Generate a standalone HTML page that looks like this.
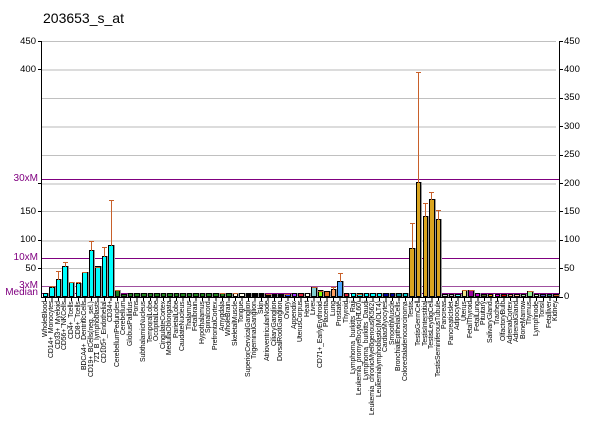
<!DOCTYPE html>
<html><head><style>
body{margin:0;width:600px;height:434px;background:#fff;position:relative;overflow:hidden;font-family:"Liberation Sans",sans-serif}
.a{position:absolute}
.t{position:absolute;font-size:14px;left:43px;top:10px;color:#000}
.gl{position:absolute;left:42px;width:514px;height:1px;background:#c0c0c0}
.gl.l{background:#dcdcdc;height:2px}
.ly{position:absolute;font-size:9.5px;right:564px;text-align:right;line-height:10px;color:#000}
.ry{position:absolute;font-size:9.5px;left:564px;line-height:10px;color:#000}
.tk{position:absolute;width:3px;height:1px;background:#000}
.pl{position:absolute;left:42px;width:517px;height:1.5px;background:#800080}
.pt{position:absolute;font-size:10px;color:#800080;right:562px;line-height:10px}
#bars{position:absolute;left:42.8px;top:41px;height:256px;display:flex;align-items:flex-end}
.c{width:6.55px;height:256px;position:relative;flex:none}
.c b{position:absolute;bottom:0;left:0;width:5.5px;height:calc(var(--v)*0.569px + 1px);background:var(--c);border:1px solid #000;box-sizing:border-box;box-shadow:1px 0 0 #999}
.c i{position:absolute;left:2.3px;width:1px;background:#c8602a;bottom:calc(var(--v)*0.569px);height:calc((var(--e) - var(--v))*0.569px)}
.c i:before{content:"";position:absolute;top:0;left:-2px;width:5px;height:1px;background:#c8602a}
#labs{position:absolute;left:42.8px;top:301px;height:130px;display:flex}
#labs span{width:6.55px;flex:none;writing-mode:vertical-rl;transform:rotate(180deg);text-align:right;font-size:6.9px;line-height:6.55px;height:130px;white-space:nowrap;color:#000;letter-spacing:-0.1px}
</style></head><body>
<div class="t">203653_s_at</div>
<div class="gl" style="top:41px"></div>
<div class="gl l" style="top:69px"></div>
<div class="gl" style="top:98px"></div>
<div class="gl l" style="top:126px"></div>
<div class="gl" style="top:155px"></div>
<div class="gl l" style="top:183px"></div>
<div class="gl" style="top:211px"></div>
<div class="gl l" style="top:240px"></div>
<div class="gl" style="top:268px"></div>
<div class="a" style="left:41px;top:41px;width:1px;height:257px;background:#000"></div>
<div class="a" style="left:559px;top:41px;width:1px;height:257px;background:#000"></div>
<div class="a" style="left:41px;top:297px;width:519px;height:1px;background:#000"></div>
<div class="tk" style="left:38px;top:41px"></div><div class="ly" style="top:37px">450</div>
<div class="tk" style="left:38px;top:69px"></div><div class="ly" style="top:65px">400</div>
<div class="tk" style="left:38px;top:183px"></div>
<div class="tk" style="left:38px;top:211px"></div><div class="ly" style="top:207px">150</div>
<div class="tk" style="left:38px;top:240px"></div><div class="ly" style="top:235px">100</div>
<div class="tk" style="left:38px;top:268px"></div><div class="ly" style="top:264px">50</div>
<div class="tk" style="left:560px;top:41px"></div><div class="ry" style="top:37px">450</div>
<div class="tk" style="left:560px;top:69px"></div><div class="ry" style="top:65px">400</div>
<div class="tk" style="left:560px;top:98px"></div><div class="ry" style="top:93px">350</div>
<div class="tk" style="left:560px;top:126px"></div><div class="ry" style="top:122px">300</div>
<div class="tk" style="left:560px;top:155px"></div><div class="ry" style="top:150px">250</div>
<div class="tk" style="left:560px;top:183px"></div><div class="ry" style="top:179px">200</div>
<div class="tk" style="left:560px;top:211px"></div><div class="ry" style="top:207px">150</div>
<div class="tk" style="left:560px;top:240px"></div><div class="ry" style="top:235px">100</div>
<div class="tk" style="left:560px;top:268px"></div><div class="ry" style="top:264px">50</div>
<div class="tk" style="left:560px;top:297px"></div><div class="ry" style="top:292px">0</div>
<div class="pl" style="top:178.5px"></div><div class="pt" style="top:174px">30xM</div>
<div class="pl" style="top:257.5px"></div><div class="pt" style="top:253px">10xM</div>
<div class="pl" style="top:285.5px;background:#a050a0"></div><div class="pt" style="top:281px">3xM</div>
<div class="pl" style="top:292.5px"></div><div class="pt" style="top:288px">Median</div>
<div id="bars">
<div class="c" style="--v:5;--c:#0ff"><b></b></div>
<div class="c" style="--v:15;--c:#0ff;--e:20"><b></b><i></i></div>
<div class="c" style="--v:30;--c:#0ff;--e:45"><b></b><i></i></div>
<div class="c" style="--v:52;--c:#0ff;--e:62"><b></b><i></i></div>
<div class="c" style="--v:25;--c:#0ff;--e:26"><b></b><i></i></div>
<div class="c" style="--v:22;--c:#0ff;--e:27"><b></b><i></i></div>
<div class="c" style="--v:43;--c:#0ff;--e:44"><b></b><i></i></div>
<div class="c" style="--v:80;--c:#0ff;--e:98"><b></b><i></i></div>
<div class="c" style="--v:52;--c:#0ff;--e:53"><b></b><i></i></div>
<div class="c" style="--v:70;--c:#0ff;--e:88"><b></b><i></i></div>
<div class="c" style="--v:90;--c:#0ff;--e:170"><b></b><i></i></div>
<div class="c" style="--v:10;--c:#1a801a;--e:13"><b></b><i></i></div>
<div class="c" style="--v:4;--c:#1a801a"><b></b></div>
<div class="c" style="--v:5;--c:#1a801a"><b></b></div>
<div class="c" style="--v:5;--c:#1a801a"><b></b></div>
<div class="c" style="--v:5;--c:#1a801a"><b></b></div>
<div class="c" style="--v:5;--c:#1a801a"><b></b></div>
<div class="c" style="--v:5;--c:#1a801a"><b></b></div>
<div class="c" style="--v:5;--c:#1a801a"><b></b></div>
<div class="c" style="--v:5;--c:#1a801a"><b></b></div>
<div class="c" style="--v:5;--c:#1a801a"><b></b></div>
<div class="c" style="--v:5;--c:#1a801a"><b></b></div>
<div class="c" style="--v:5;--c:#1a801a"><b></b></div>
<div class="c" style="--v:5;--c:#1a801a"><b></b></div>
<div class="c" style="--v:5;--c:#1a801a"><b></b></div>
<div class="c" style="--v:5;--c:#1a801a"><b></b></div>
<div class="c" style="--v:5;--c:#1a801a"><b></b></div>
<div class="c" style="--v:5;--c:#1a801a;--e:7"><b></b><i></i></div>
<div class="c" style="--v:5;--c:#1a801a"><b></b></div>
<div class="c" style="--v:5;--c:#fff5dc;--e:7"><b></b><i></i></div>
<div class="c" style="--v:5;--c:#fffff0"><b></b></div>
<div class="c" style="--v:5;--c:#000"><b></b></div>
<div class="c" style="--v:5;--c:#000"><b></b></div>
<div class="c" style="--v:5;--c:#000"><b></b></div>
<div class="c" style="--v:4;--c:#000;--e:5"><b></b><i></i></div>
<div class="c" style="--v:4;--c:#000"><b></b></div>
<div class="c" style="--v:4;--c:#000"><b></b></div>
<div class="c" style="--v:4;--c:#2040ff;--e:5"><b></b><i></i></div>
<div class="c" style="--v:5;--c:#9933ff"><b></b></div>
<div class="c" style="--v:6;--c:#e0203a"><b></b></div>
<div class="c" style="--v:5;--c:#fffff0"><b></b></div>
<div class="c" style="--v:15;--c:#80d0d0;--e:17"><b></b><i></i></div>
<div class="c" style="--v:10;--c:#80ff00;--e:11"><b></b><i></i></div>
<div class="c" style="--v:8;--c:#e07020"><b></b></div>
<div class="c" style="--v:13;--c:#ffa060;--e:18"><b></b><i></i></div>
<div class="c" style="--v:26;--c:#4da6ff;--e:42"><b></b><i></i></div>
<div class="c" style="--v:5;--c:#e0203a"><b></b></div>
<div class="c" style="--v:5;--c:#0ff"><b></b></div>
<div class="c" style="--v:5;--c:#0ff;--e:6"><b></b><i></i></div>
<div class="c" style="--v:5;--c:#0ff"><b></b></div>
<div class="c" style="--v:5;--c:#0ff"><b></b></div>
<div class="c" style="--v:5;--c:#0ff"><b></b></div>
<div class="c" style="--v:6;--c:#000099"><b></b></div>
<div class="c" style="--v:6;--c:#000099"><b></b></div>
<div class="c" style="--v:6;--c:#008b8b"><b></b></div>
<div class="c" style="--v:5;--c:#00cccc"><b></b></div>
<div class="c" style="--v:85;--c:#daa520;--e:130"><b></b><i></i></div>
<div class="c" style="--v:200;--c:#daa520;--e:395"><b></b><i></i></div>
<div class="c" style="--v:140;--c:#daa520;--e:165"><b></b><i></i></div>
<div class="c" style="--v:170;--c:#daa520;--e:185"><b></b><i></i></div>
<div class="c" style="--v:135;--c:#daa520;--e:153"><b></b><i></i></div>
<div class="c" style="--v:4;--c:#d0d0d0"><b></b></div>
<div class="c" style="--v:4;--c:#c0c0c0"><b></b></div>
<div class="c" style="--v:4;--c:#66ffff"><b></b></div>
<div class="c" style="--v:10;--c:#f0e68c;--e:12"><b></b><i></i></div>
<div class="c" style="--v:10;--c:#990099;--e:13"><b></b><i></i></div>
<div class="c" style="--v:5;--c:#cc00cc"><b></b></div>
<div class="c" style="--v:4;--c:#556b2f"><b></b></div>
<div class="c" style="--v:4;--c:#ffa500"><b></b></div>
<div class="c" style="--v:4;--c:#ee00ee"><b></b></div>
<div class="c" style="--v:4;--c:#cc0000"><b></b></div>
<div class="c" style="--v:4;--c:#ffa07a"><b></b></div>
<div class="c" style="--v:4;--c:#ffc0a0"><b></b></div>
<div class="c" style="--v:4;--c:#b0e0b0"><b></b></div>
<div class="c" style="--v:8;--c:#90ee90;--e:11"><b></b><i></i></div>
<div class="c" style="--v:4;--c:#d0f0d0"><b></b></div>
<div class="c" style="--v:4;--c:#6060c0"><b></b></div>
<div class="c" style="--v:4;--c:#2f8080"><b></b></div>
<div class="c" style="--v:3;--c:#555;--e:4"><b></b><i></i></div>
</div>
<div id="labs">
<span>WholeBlood</span><span>CD14+_Monocytes</span><span>CD33+_Myeloid</span><span>CD56+_NKCells</span><span>CD4+_Tcells</span><span>CD8+_Tcells</span><span>BDCA4+_DentriticCells</span><span>CD19+_BCells(neg._sel.)</span><span>721_B_lymphoblasts</span><span>CD105+_Endothelial</span><span>CD34+</span><span>CerebellumPeduncles</span><span>Cerebellum</span><span>GlobusPallidus</span><span>Pons</span><span>SubthalamicNucleus</span><span>TemporalLobe</span><span>OccipitalLobe</span><span>CingulateCortex</span><span>MedullaOblongata</span><span>ParietalLobe</span><span>CaudateNucleus</span><span>Thalamus</span><span>Fetalbrain</span><span>Hypothalamus</span><span>Spinalcord</span><span>PrefrontalCortex</span><span>Amygdala</span><span>WholeBrain</span><span>SkeletalMuscle</span><span>Tongue</span><span>SuperiorCervicalGanglion</span><span>TrigeminalGanglion</span><span>Skin</span><span>AtrioventricularNode</span><span>CiliaryGanglion</span><span>DorsalRootGanglion</span><span>Ovary</span><span>Appendix</span><span>UterusCorpus</span><span>Heart</span><span>Liver</span><span>CD71+_EarlyErythroid</span><span>Placenta</span><span>Lung</span><span>Prostate</span><span>Thyroid</span><span>Lymphoma_burkitts_Raji</span><span>Leukemia_promyelocytic(HL60)</span><span>Lymphoma_burkitts_Daudi</span><span>Leukemia_chronicMyelogenous(K562)</span><span>Leukemialymphoblastic(MOLT4)</span><span>CardiacMyocytes</span><span>SmoothMuscle</span><span>BronchialEpithelialCells</span><span>Colorectaladenocarcinoma</span><span>Testis</span><span>TestisGermCell</span><span>TestisInterstitial</span><span>TestisLeydigCell</span><span>TestisSeminiferousTubule</span><span>Pancreas</span><span>PancreaticIslet</span><span>Adipocyte</span><span>Uterus</span><span>FetalThyroid</span><span>FetalLung</span><span>Pituitary</span><span>SalivaryGland</span><span>Trachea</span><span>OlfactoryBulb</span><span>AdrenalCortex</span><span>AdrenalGland</span><span>BoneMarrow</span><span>Thymus</span><span>Lymphnode</span><span>Tonsil</span><span>Fetalliver</span><span>Kidney</span>
</div>
<div class="a" style="left:42px;top:298px;width:517px;height:3px;background:repeating-linear-gradient(90deg,transparent 0,transparent 3px,#000 3px,#000 4px,transparent 4px,transparent 6.55px)"></div>
</body></html>
